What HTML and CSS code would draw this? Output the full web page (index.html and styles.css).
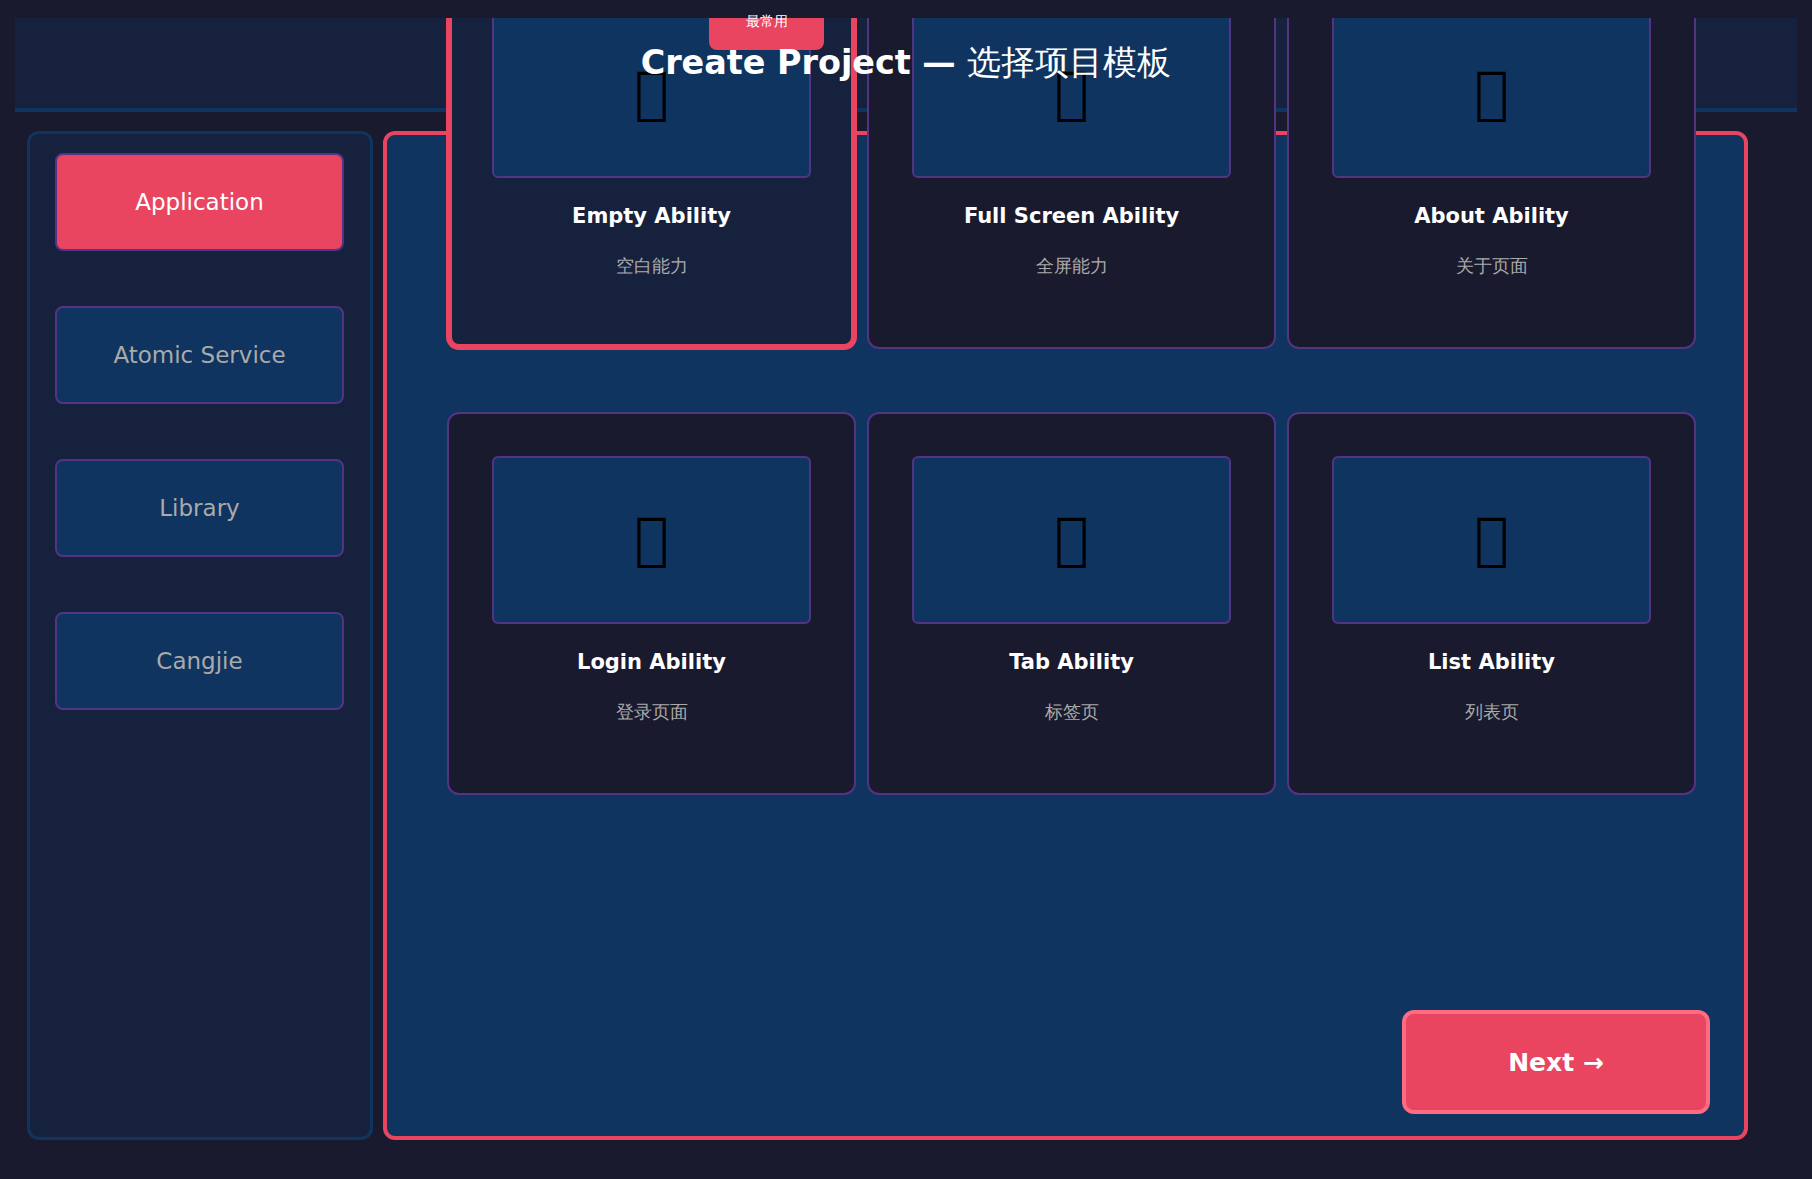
FILE: index.html
```html
<!doctype html>
<html>
<head>
  <meta charset="utf-8">
  <title>Create Project</title>
  <link rel="stylesheet" href="styles.css">
</head>
<body>
<div class="top-band"></div>
<div class="page-container">
  <div class="page-header">
    <h1 class="page-title">Create Project — <span class="page-title-cn">选择项目模板</span></h1>
  </div>
  <div class="content-row">
    <div class="sidebar">
      <div class="side-item active">Application</div>
      <div class="side-item">Atomic Service</div>
      <div class="side-item">Library</div>
      <div class="side-item">Cangjie</div>
    </div>
    <div class="main-panel">
      <div class="template-grid">
        <div class="template-card selected">
          <div class="card-badge"><span class="card-badge-text">最常用</span></div>
          <div class="card-preview">&#xE000;</div>
          <div class="card-title">Empty Ability</div>
          <div class="card-sub">空白能力</div>
        </div>
        <div class="template-card">
          <div class="card-preview">&#xE000;</div>
          <div class="card-title">Full Screen Ability</div>
          <div class="card-sub">全屏能力</div>
        </div>
        <div class="template-card">
          <div class="card-preview">&#xE000;</div>
          <div class="card-title">About Ability</div>
          <div class="card-sub">关于页面</div>
        </div>
        <div class="template-card">
          <div class="card-preview">&#xE000;</div>
          <div class="card-title">Login Ability</div>
          <div class="card-sub">登录页面</div>
        </div>
        <div class="template-card">
          <div class="card-preview">&#xE000;</div>
          <div class="card-title">Tab Ability</div>
          <div class="card-sub">标签页</div>
        </div>
        <div class="template-card">
          <div class="card-preview">&#xE000;</div>
          <div class="card-title">List Ability</div>
          <div class="card-sub">列表页</div>
        </div>
      </div>
      <div class="next-button">Next →</div>
    </div>
  </div>
</div>
</body>
</html>
```

FILE: styles.css
```css
html,
body {
  background: #1a1a2e;
  height: 100%;
  margin: 0;
  overflow: hidden;
}
body {
  font-family: "DejaVu Sans", sans-serif;
}
/* hides the cards where they run off the top of the window */
.top-band {
  background: #1a1a2e;
  height: 18px;
  left: 0;
  position: absolute;
  right: 0;
  top: 0;
  z-index: 5;
}
.page-container {
  padding: 18px 15px 0;
}
.page-header {
  align-items: center;
  background: #16213e;
  border-bottom: 4px solid #0f3460;
  display: flex;
  height: 90px;
  justify-content: center;
}
.page-title {
  color: white;
  font-size: 33.4px;
  font-weight: bold;
  margin: 0;
  position: relative;
  z-index: 7;
}
.page-title-cn {
  font-size: 34px;
  font-weight: normal;
}
.content-row {
  display: flex;
  gap: 10px;
  margin-top: 19px;
  padding-left: 12px;
}
.sidebar {
  background: #16213e;
  border: 3px solid #0f3460;
  border-radius: 12px;
  box-sizing: border-box;
  display: flex;
  flex-direction: column;
  gap: 55px;
  height: 1009px;
  padding: 19px 26px 19px 25px;
  width: 346px;
}
.side-item {
  align-items: center;
  background: #0f3460;
  border: 2px solid #533483;
  border-radius: 8px;
  box-sizing: border-box;
  color: #aaaaaa;
  display: flex;
  font-size: 23px;
  height: 98px;
  justify-content: center;
}
.side-item.active {
  background: #e94560;
  color: white;
}
.main-panel {
  background: #0f3460;
  border: 4px solid #e94560;
  border-radius: 12px;
  box-sizing: border-box;
  display: flex;
  flex-direction: column;
  height: 1009px;
  padding: 0 34px 22px 60px;
  width: 1365px;
}
.template-grid {
  display: grid;
  gap: 63px 11px;
  grid-template-columns: repeat(3, 409px);
  grid-template-rows: repeat(2, 383px);
  margin-top: -169px;
}
.template-card {
  align-items: center;
  background: #1a1a2e;
  border: 2px solid #533483;
  border-radius: 12px;
  box-sizing: border-box;
  display: flex;
  flex-direction: column;
  padding: 42px 43px 0;
}
.template-card.selected {
  background: #16213e;
  border: 5px solid #e94560;
  box-shadow: 0 0 0 1px #e94560;
  padding: 39px 40px 0;
  position: relative;
}
.card-badge {
  align-items: center;
  background: #e94560;
  border-radius: 8px;
  color: white;
  display: flex;
  font-size: 14.4px;
  height: 58px;
  justify-content: center;
  position: absolute;
  right: 27px;
  top: 21px;
  width: 115px;
}
.card-badge-text {
  position: relative;
  z-index: 6;
}
.card-preview {
  align-items: center;
  align-self: stretch;
  background: #0f3460;
  border: 2px solid #533483;
  border-radius: 6px;
  box-sizing: border-box;
  color: black;
  display: flex;
  font-size: 57px;
  height: 168px;
  justify-content: center;
  padding-bottom: 5px;
}
.card-title {
  color: white;
  font-size: 21px;
  font-weight: bold;
  margin-top: 26px;
}
.card-sub {
  color: #aaaaaa;
  font-size: 18px;
  margin-top: 26px;
}
.next-button {
  align-items: center;
  align-self: flex-end;
  background: #e94560;
  border: 4px solid #ff6b81;
  border-radius: 12px;
  box-sizing: border-box;
  color: white;
  display: flex;
  font-size: 25px;
  font-weight: bold;
  height: 104px;
  justify-content: center;
  margin-top: auto;
  width: 308px;
}
```
